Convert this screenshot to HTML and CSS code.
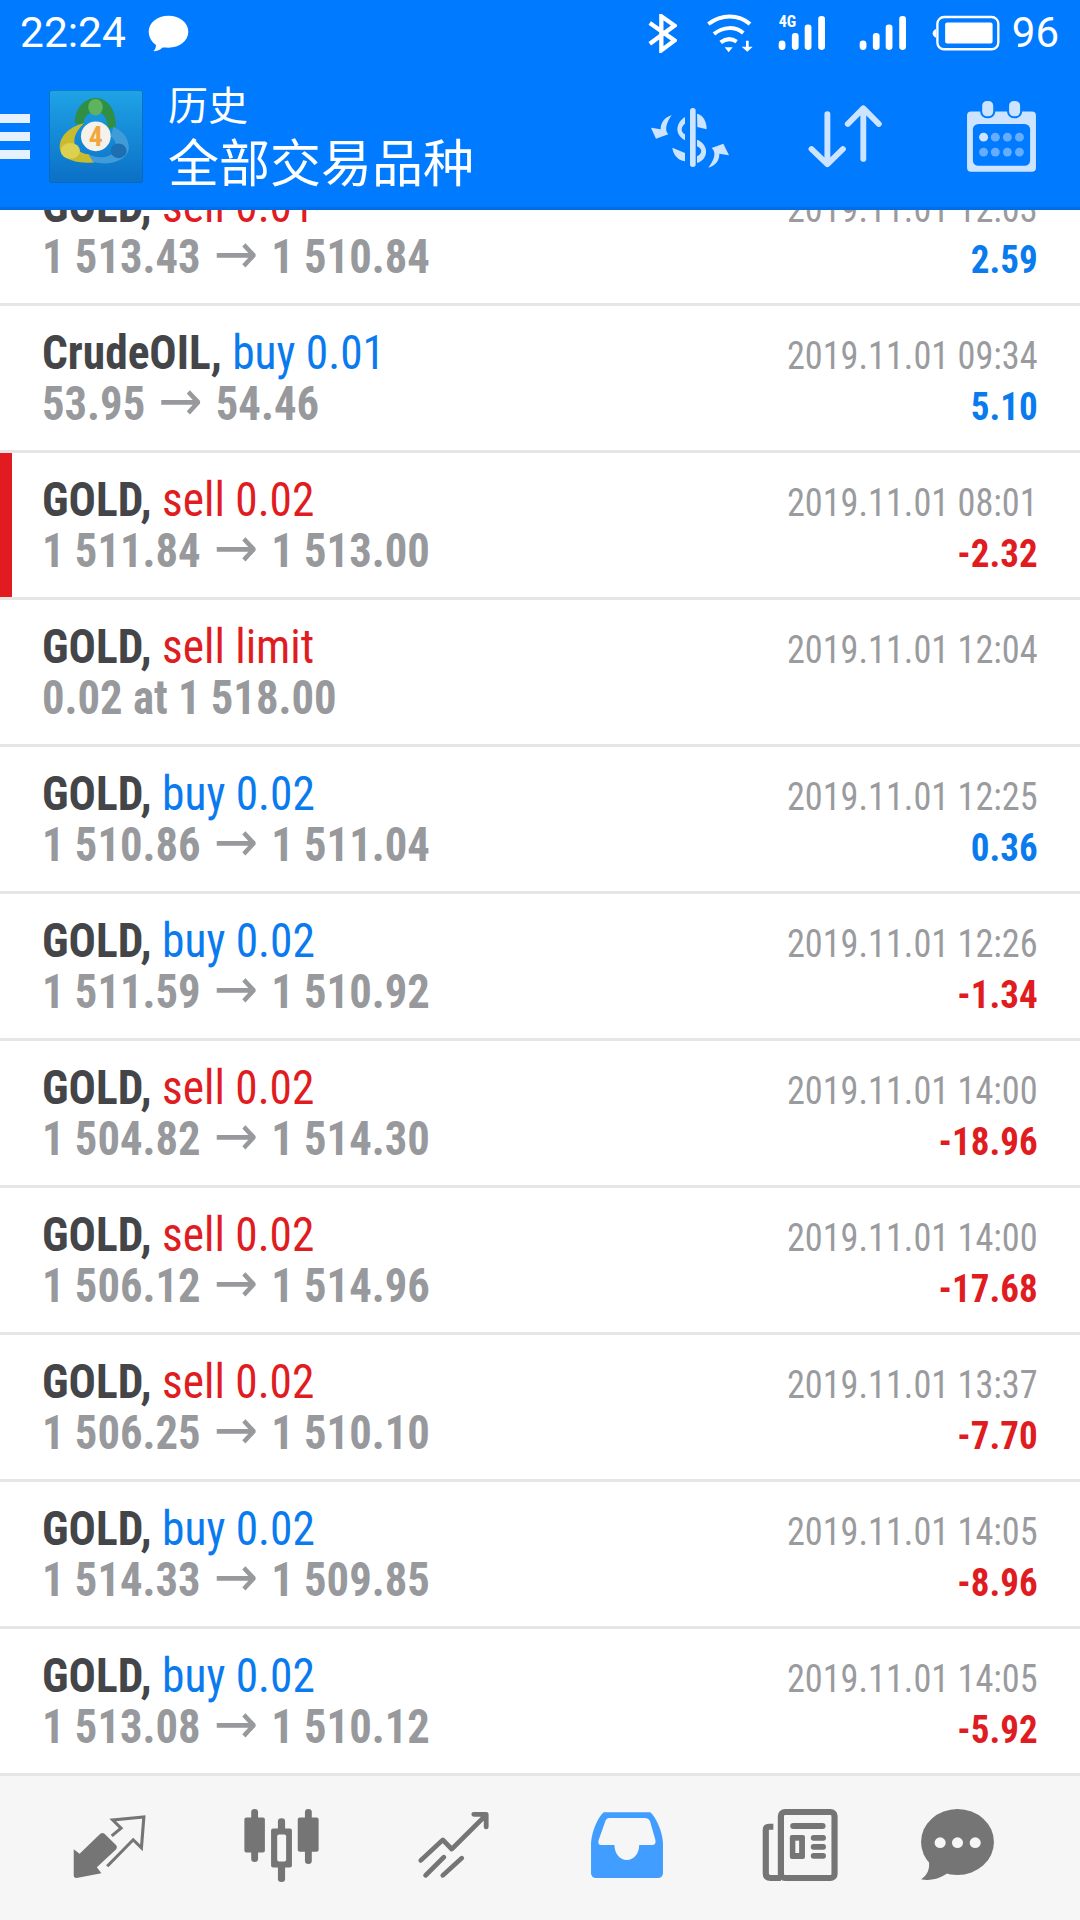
FILE: index.html
```html
<!DOCTYPE html>
<html lang="zh">
<head>
<meta charset="utf-8">
<title>历史</title>
<link rel="stylesheet" href="styles.css">
</head>
<body>
<div class="app">
<header class="header">
  <div class="status">
    <span class="clock">22:24</span>
    <svg class="st-bubble" preserveAspectRatio="none" viewBox="430 42 118 112"><path fill="#fff" d="M489 44c33 0 57 21 57 49 0 27-25 48-57 48-8 0-14-1-18 0-6 6-14 11-26 11 5-4 8-10 8-19-12-9-21-23-21-40 0-28 24-49 57-49z"/></svg>
    <span class="status-right">
      <svg class="st-bt" viewBox="22 15 90 118"><polyline fill="none" stroke="#fff" stroke-width="13" points="30,42 105,95 65,125 65,22 105,50 30,105"/></svg>
      <svg class="st-wifi" viewBox="198 12 144 120"><g fill="none" stroke="#fff" stroke-width="12"><path d="M205 45c40-30 90-30 125 0"/><path d="M222 75c28-23 63-23 88-3"/><path d="M242 100c16-12 33-12 48-2"/></g><path fill="#fff" d="M254 115h24l-12 15z"/><path fill="#fff" d="M318 95h8v18h12l-16 15-17-15h13z"/></svg>
      <span class="st-sim">
        <span class="st-4g">4G</span>
        <svg class="st-bars" viewBox="418 22 142 106"><g fill="#fff"><rect x="420" y="97" width="20" height="28" rx="10"/><rect x="459" y="75" width="20" height="50" rx="9"/><rect x="497" y="50" width="20" height="75" rx="9"/><rect x="537" y="25" width="20" height="100" rx="9"/></g></svg>
      </span>
      <svg class="st-bars st-bars2" viewBox="418 22 142 106"><g fill="#fff"><rect x="420" y="97" width="20" height="28" rx="10"/><rect x="459" y="75" width="20" height="50" rx="9"/><rect x="497" y="50" width="20" height="75" rx="9"/><rect x="537" y="25" width="20" height="100" rx="9"/></g></svg>
      <svg class="st-batt" preserveAspectRatio="none" viewBox="1136 46 202 106"><rect x="1152" y="52" width="181" height="95" rx="20" fill="none" stroke="#fff" stroke-width="7"/><rect x="1175" y="68" width="141" height="62" rx="6" fill="#fff"/><path fill="#fff" d="M1148 87c-6 2-10 7-10 13s4 11 10 13z"/></svg>
      <span class="batt-num">96</span>
    </span>
  </div>
  <div class="toolbar">
    <span class="menu"><i></i><i></i><i></i></span>
    <span class="logo">
      <svg class="logo-art" viewBox="12 12 283 281">
        <defs><linearGradient id="lg" x1="0" y1="0" x2="0" y2="1"><stop offset="0" stop-color="#1fa3e6"/><stop offset="1" stop-color="#0b70c6"/></linearGradient></defs>
        <rect x="13" y="13" width="281" height="279" rx="7" fill="url(#lg)" stroke="#0a62ad" stroke-width="2"/>
        <path fill="#2f8f44" d="M90 112C88 65 122 36 152 36c34 0 62 32 62 86l-26 8c4-24-10-52-36-52-24 0-38 20-36 42z"/>
        <ellipse cx="152" cy="64" rx="22" ry="25" fill="#5fb25f"/>
        <path fill="#c9bb2e" d="M118 112C78 122 44 148 44 186c0 30 44 52 106 44l-18-24c-26 0-46-18-44-42 1-18 14-36 30-52z"/>
        <ellipse cx="76" cy="196" rx="29" ry="24" fill="#dcd150"/>
        <path fill="#3f9cd8" d="M206 124c32 12 50 40 46 70-8 32-62 50-108 34l-14-22c28 14 62 12 78-6 12-14 6-36-10-48z"/>
        <ellipse cx="222" cy="196" rx="24" ry="22" fill="#1c6fb2"/>
        <circle cx="153" cy="152" r="45" fill="#f4f2ea"/>
        <text class="logo-four" x="153" y="180" text-anchor="middle">4</text>
      </svg>
    </span>
    <span class="titles">
      <span class="title-sm">历史</span>
      <span class="title-lg">全部交易品种</span>
    </span>
    <span class="actions">
      <svg class="ac-dollar" viewBox="0 0 300 240"><g fill="#cce4ff"><rect x="150" y="33" width="17" height="177" rx="8"/><path d="M135 60c-25 15-35 50 0 70v-18c-13-7-13-22 0-32z"/><path d="M171 50c20 5 29 25 29 47l-28-7z"/><path d="M171 128c34 12 39 57 0 70v-20c17-8 17-23 0-30z"/><path d="M97 152c3 23 18 38 38 41v-25z"/><path d="M95 55C72 62 62 78 62 97L33 92l15 33 37-13C72 100 80 75 95 55z"/><path d="M205 212c23-7 33-22 33-42l29 5-17-35-35 13c17 15 5 39-10 59z"/></g></svg>
      <svg class="ac-sort" preserveAspectRatio="none" viewBox="778 315 220 195"><g fill="none" stroke="#cce4ff" stroke-width="17" stroke-linecap="round" stroke-linejoin="round"><path d="M837 345v150M791 450l46 46 45-46"/><path d="M941 330v150M896 375l45-47 45 47"/></g></svg>
      <svg class="ac-cal" preserveAspectRatio="none" viewBox="1240 300 206 220"><rect x="1243" y="335" width="200" height="181" rx="12" fill="#cce4ff"/><rect x="1260" y="372" width="166" height="126" rx="16" fill="#007bff"/><g fill="#cce4ff" stroke="#007bff" stroke-width="6"><rect x="1284" y="300" width="38" height="52" rx="17"/><rect x="1362" y="300" width="38" height="52" rx="17"/></g><g fill="#66adff"><circle cx="1291" cy="412" r="13" fill="#cce4ff"/><circle cx="1325" cy="412" r="13"/><circle cx="1360" cy="412" r="13"/><circle cx="1395" cy="412" r="13"/><circle cx="1291" cy="457" r="13"/><circle cx="1325" cy="457" r="13"/><circle cx="1360" cy="457" r="13"/><circle cx="1395" cy="457" r="13"/></g></svg>
    </span>
  </div>
</header>
<main class="list">
  <div class="row"><div class="col-l"><div class="l1"><b>GOLD,</b> <span class="sell">sell 0.01</span></div><div class="l2">1 513.43 <span class="ar">→</span> 1 510.84</div></div><div class="col-r"><div class="date">2019.11.01 12:03</div><div class="pl pos">2.59</div></div></div>
  <div class="row"><div class="col-l"><div class="l1"><b>CrudeOIL,</b> <span class="buy">buy 0.01</span></div><div class="l2">53.95 <span class="ar">→</span> 54.46</div></div><div class="col-r"><div class="date">2019.11.01 09:34</div><div class="pl pos">5.10</div></div></div>
  <div class="row marked"><div class="col-l"><div class="l1"><b>GOLD,</b> <span class="sell">sell 0.02</span></div><div class="l2">1 511.84 <span class="ar">→</span> 1 513.00</div></div><div class="col-r"><div class="date">2019.11.01 08:01</div><div class="pl neg">-2.32</div></div></div>
  <div class="row"><div class="col-l"><div class="l1"><b>GOLD,</b> <span class="sell">sell limit</span></div><div class="l2">0.02 at 1 518.00</div></div><div class="col-r"><div class="date">2019.11.01 12:04</div></div></div>
  <div class="row"><div class="col-l"><div class="l1"><b>GOLD,</b> <span class="buy">buy 0.02</span></div><div class="l2">1 510.86 <span class="ar">→</span> 1 511.04</div></div><div class="col-r"><div class="date">2019.11.01 12:25</div><div class="pl pos">0.36</div></div></div>
  <div class="row"><div class="col-l"><div class="l1"><b>GOLD,</b> <span class="buy">buy 0.02</span></div><div class="l2">1 511.59 <span class="ar">→</span> 1 510.92</div></div><div class="col-r"><div class="date">2019.11.01 12:26</div><div class="pl neg">-1.34</div></div></div>
  <div class="row"><div class="col-l"><div class="l1"><b>GOLD,</b> <span class="sell">sell 0.02</span></div><div class="l2">1 504.82 <span class="ar">→</span> 1 514.30</div></div><div class="col-r"><div class="date">2019.11.01 14:00</div><div class="pl neg">-18.96</div></div></div>
  <div class="row"><div class="col-l"><div class="l1"><b>GOLD,</b> <span class="sell">sell 0.02</span></div><div class="l2">1 506.12 <span class="ar">→</span> 1 514.96</div></div><div class="col-r"><div class="date">2019.11.01 14:00</div><div class="pl neg">-17.68</div></div></div>
  <div class="row"><div class="col-l"><div class="l1"><b>GOLD,</b> <span class="sell">sell 0.02</span></div><div class="l2">1 506.25 <span class="ar">→</span> 1 510.10</div></div><div class="col-r"><div class="date">2019.11.01 13:37</div><div class="pl neg">-7.70</div></div></div>
  <div class="row"><div class="col-l"><div class="l1"><b>GOLD,</b> <span class="buy">buy 0.02</span></div><div class="l2">1 514.33 <span class="ar">→</span> 1 509.85</div></div><div class="col-r"><div class="date">2019.11.01 14:05</div><div class="pl neg">-8.96</div></div></div>
  <div class="row"><div class="col-l"><div class="l1"><b>GOLD,</b> <span class="buy">buy 0.02</span></div><div class="l2">1 513.08 <span class="ar">→</span> 1 510.12</div></div><div class="col-r"><div class="date">2019.11.01 14:05</div><div class="pl neg">-5.92</div></div></div>
</main>
<nav class="tabs">
  <svg class="t1" preserveAspectRatio="none" viewBox="210 160 220 200"><path fill="#757575" d="M215 268l17 14 60-60q6-5 12 0l34 34q5 6 0 12l-56 54 13 18-72 14q-8 0-8-8z"/><polyline fill="none" stroke="#757575" stroke-width="9" points="325,228 352,205 328,181 418,172 411,264 387,240 312,319"/></svg>
  <svg class="t2" preserveAspectRatio="none" viewBox="705 145 225 226"><g fill="#757575"><rect x="729" y="148" width="20" height="160" rx="10"/><rect x="709" y="174" width="60" height="105" rx="6"/><rect x="886" y="148" width="20" height="166" rx="10"/><rect x="865" y="174" width="61" height="103" rx="6"/><rect x="807" y="176" width="21" height="192" rx="10"/><rect x="787" y="207" width="61" height="117" rx="6"/></g><rect x="805" y="225" width="26" height="81" rx="5" fill="#f6f6f6"/></svg>
  <svg class="t3" preserveAspectRatio="none" viewBox="1210 150 215 208"><g fill="none" stroke="#757575" stroke-width="14" stroke-linecap="round" stroke-linejoin="round"><path d="M1221 302l64-62 26 28 100-103M1375 163h36v38"/><path d="M1235 347l53-55M1285 347l55-52"/></g></svg>
  <svg class="t4" preserveAspectRatio="none" viewBox="145 153 215 204"><path fill="#419dff" d="M148 250c2-40 22-80 37-93h135c15 13 35 53 37 93v90a14 14 0 0 1-14 14H162a14 14 0 0 1-14-14z"/><path fill="#f6f6f6" d="M200 174h105q10 0 14 8l16 58q3 15-10 15h-37c0 25-15 45-36 45s-36-20-36-45h-38q-12 0-8-14l20-59q3-8 10-8z"/></svg>
  <svg class="t5" preserveAspectRatio="none" viewBox="645 144 224 222"><g fill="none" stroke="#757575" stroke-width="18"><rect x="700" y="156" width="156" height="198" rx="12"/><path d="M678 200h-13q-9 0-9 10v130q0 14 14 14h30"/></g><g fill="#757575"><rect x="727" y="189" width="103" height="18" rx="9"/><rect x="787" y="225" width="44" height="17" rx="8"/><rect x="787" y="252" width="44" height="17" rx="8"/><rect x="787" y="279" width="44" height="17" rx="8"/><rect x="726" y="225" width="44" height="72" rx="6"/></g><rect x="742" y="242" width="11" height="37" fill="#f6f6f6"/></svg>
  <svg class="t6" preserveAspectRatio="none" viewBox="1105 144 216 222"><g fill="#757575"><ellipse cx="1213" cy="246" rx="105" ry="99"/><path d="M1130 300c5 30-5 45-22 58 30 6 60-4 80-22z"/></g><g fill="#f6f6f6"><circle cx="1163" cy="248" r="16"/><circle cx="1213" cy="248" r="16"/><circle cx="1264" cy="248" r="16"/></g></svg>
</nav>
</div>
</body>
</html>
```
FILE: styles.css
```css
* { box-sizing: border-box; }
html, body { margin: 0; padding: 0; }
body { width: 1080px; height: 1920px; overflow: hidden; background: #fff; font-family: Roboto, "Liberation Sans", sans-serif; }
.app { display: flex; flex-direction: column; width: 1080px; height: 1920px; overflow: hidden; }

.header { position: relative; z-index: 2; flex: none; height: 210px; background: #007bff; border-bottom: 3px solid #006fe6; color: #fff; }
.status { display: flex; align-items: center; height: 66px; padding: 0 21px 0 20px; }
.clock { font-size: 42.5px; line-height: 66px; }
.st-bubble { width: 41px; height: 37px; margin-left: 22px; }
.status-right { display: flex; align-items: center; margin-left: auto; }
.st-bt { width: 30px; height: 39px; }
.st-wifi { width: 48px; height: 40px; margin-left: 29px; }
.st-sim { position: relative; display: flex; margin-left: 24px; }
.st-4g { position: absolute; left: 1px; top: -1px; font-size: 16px; line-height: 16px; font-weight: 700; font-stretch: 75%; }
.st-bars { width: 48px; height: 36px; }
.st-bars2 { margin-left: 33px; }
.st-batt { width: 68px; height: 36px; margin-left: 25px; }
.batt-num { font-size: 42px; line-height: 66px; margin-left: 12px; }

.toolbar { display: flex; align-items: center; height: 141px; }
.menu { display: flex; flex-direction: column; gap: 9px; width: 30px; }
.menu i { display: block; height: 9px; background: #e6f1ff; }
.logo { display: flex; margin-left: 19px; }
.logo-art { width: 94px; height: 93px; }
.logo-four { font-size: 84px; font-weight: 700; font-stretch: 75%; fill: #f1a63e; }
.titles { display: flex; flex-direction: column; margin-left: 25px; padding-bottom: 3px; font-family: "Noto Sans CJK SC", sans-serif; font-weight: 400; }
.title-sm { font-size: 40px; line-height: 46px; margin-bottom: 3px; }
.title-lg { font-size: 51px; line-height: 62px; }
.actions { display: flex; align-items: center; margin-left: auto; padding-right: 43px; }
.ac-dollar { width: 100px; height: 80px; }
.ac-sort { width: 76px; height: 65px; margin-left: 67px; }
.ac-cal { width: 71px; height: 73px; margin-left: 83px; }

.list { flex: 1; min-height: 0; margin-top: -51px; }
.row { display: flex; justify-content: space-between; height: 147px; padding: 21px 42px 21px 42px; border-bottom: 3px solid #e6e6e6; }
.marked { box-shadow: inset 12px 0 0 #e21b20; }
.col-r { padding-top: 4px; text-align: right; }
.l1, .l2 { font-size: 48px; line-height: 51px; font-stretch: 75%; white-space: nowrap; transform-origin: left center; }
.l1 { color: #df1c1f; transform: scaleX(0.945); }
.l1 b { color: #444548; font-weight: 700; }
.sell { color: #df1c1f; }
.buy { color: #0a7bef; }
.l2 { font-weight: 700; color: #97999c; transform: scaleX(0.93); }
.ar { margin: 0 3px; font-family: "DejaVu Sans", sans-serif; font-size: 57px; line-height: 0; font-weight: 400; font-stretch: 100%; }
.date { font-size: 39px; line-height: 51px; font-stretch: 75%; color: #9a9b9e; transform: scaleX(0.93); transform-origin: right center; }
.pl { font-size: 38px; line-height: 51px; font-weight: 700; font-stretch: 75%; transform: scaleX(0.975); transform-origin: right center; }
.pos { color: #0a7bef; }
.neg { color: #df1c1f; }

.tabs { flex: none; display: flex; align-items: flex-start; height: 147px; background: #f6f6f6; border-top: 3px solid #e6e6e6; }
.t1 { width: 76px; height: 67px; margin: 37px 0 0 72px; }
.t2 { width: 77px; height: 75px; margin: 32px 0 0 95px; }
.t3 { width: 74px; height: 69px; margin: 34px 0 0 97px; }
.t4 { width: 74px; height: 68px; margin: 35px 0 0 99px; }
.t5 { width: 77px; height: 74px; margin: 32px 0 0 98px; }
.t6 { width: 75px; height: 74px; margin: 32px 0 0 81px; }
```
